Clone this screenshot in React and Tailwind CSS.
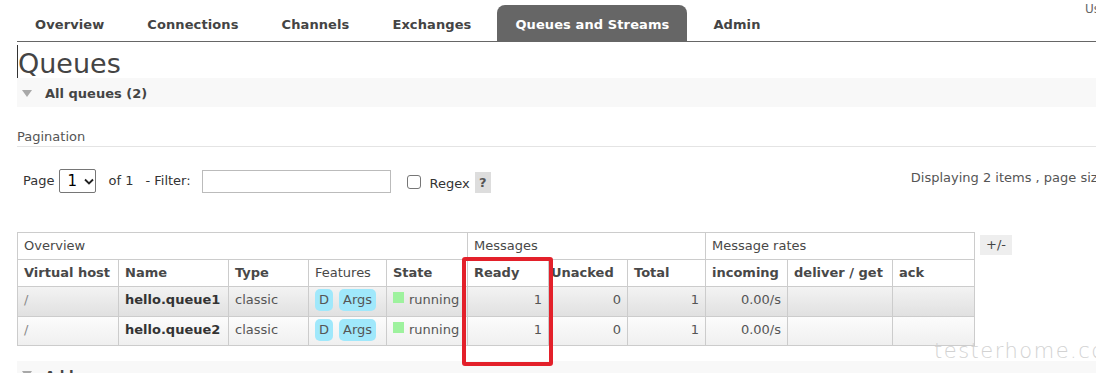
import React from 'react';

const tabs = ['Overview', 'Connections', 'Channels', 'Exchanges', 'Queues and Streams', 'Admin'];

const queues = [
  { vhost: '/', name: 'hello.queue1', type: 'classic', ready: 1, unacked: 0, total: 1, incoming: '0.00/s' },
  { vhost: '/', name: 'hello.queue2', type: 'classic', ready: 1, unacked: 0, total: 1, incoming: '0.00/s' },
];

const Triangle = () => (
  <svg width="10" height="7" viewBox="0 0 10 7" className="mr-[13px] shrink-0">
    <path d="M0 0 L10 0 L5 7 Z" fill="#a8a8a8" />
  </svg>
);

const App = () => {
  const th = 'border border-[#cccccc] px-[6px] text-left font-bold whitespace-nowrap';
  const td = 'border border-[#cccccc] px-[6px] pt-[3px] align-top whitespace-nowrap';

  return (
    <div className="relative w-[1096px] h-[373px] overflow-hidden bg-white text-[13px] text-[#484848] font-['DejaVu_Sans',sans-serif]">
      {/* top info, cut off at the edge */}
      <div className="absolute left-[1085px] top-[0px] text-[12px] text-[#666] whitespace-nowrap">User guest</div>

      {/* Tabs */}
      <div className="ml-[17px] pt-[5px] flex items-end gap-[9px] pl-px border-b border-[#666666] h-[42px]">
        {tabs.map((t) => (
          <div
            key={t}
            className={
              t === 'Queues and Streams'
                ? 'h-[36px] px-[18px] pt-[4px] flex items-center rounded-t-[8px] bg-[#666666] text-white font-bold tracking-[0.1px] whitespace-nowrap'
                : 'h-[36px] px-[17px] pt-[4px] flex items-center text-[#444] font-bold tracking-[0.1px] whitespace-nowrap'
            }
          >
            {t}
          </div>
        ))}
      </div>

      <div className="ml-[17px]">
        {/* Heading */}
        <h1 className="mt-[3px] h-[33px] border-l border-[#333] text-[27px] leading-[37px] text-[#444] font-normal overflow-visible">
          Queues
        </h1>

        {/* All queues section */}
        <div className="h-[29px] bg-[#f8f8f8] flex items-center pl-[5px] pt-[2px] font-bold text-[#444]">
          <Triangle />
          All queues (2)
        </div>

        {/* Pagination */}
        <div className="mt-[21px] h-[19px] pt-[1px] border-b border-[#e4e4e4] text-[#555] leading-[16px]">Pagination</div>

        <div className="mt-[22px] h-[24px] flex items-center pl-[6px] text-[#333] whitespace-nowrap">
          <span className="shrink-0">Page</span>
          <div className="shrink-0 ml-[5px] w-[37px] h-[24px] border border-[#767676] rounded-[2px] flex items-center pl-[7px] text-[15px] text-black">
            1
            <svg width="10" height="7" viewBox="0 0 10 7" className="ml-[7px]">
              <path d="M1 1.5 L5 5.5 L9 1.5" fill="none" stroke="#222" strokeWidth="1.8" />
            </svg>
          </div>
          <span className="shrink-0 ml-[12px]">of 1</span>
          <span className="shrink-0 ml-[12px]">- Filter:</span>
          <div className="shrink-0 ml-[11px] w-[189px] h-[23px] border border-[#bbbbbb] bg-white"></div>
          <div className="shrink-0 ml-[16px] mt-[2px] w-[14px] h-[14px] border border-[#767676] rounded-[3px] bg-white"></div>
          <span className="shrink-0 ml-[9px] mt-[5px]">Regex</span>
          <span className="shrink-0 ml-[5px] mt-[3px] w-[16px] h-[21px] bg-[#dddddd] flex items-center justify-center text-[#555] font-bold">?</span>
          <span className="shrink-0 ml-[420px] -mt-[6px] text-[#555]">Displaying 2 items , page size up to: 100</span>
        </div>

        {/* Table */}
        <div className="mt-[39px] flex items-start gap-[5px]">
          <table className="table-fixed border-collapse w-[957px] shrink-0">
            <colgroup>
              <col className="w-[101px]" />
              <col className="w-[110px]" />
              <col className="w-[80px]" />
              <col className="w-[78px]" />
              <col className="w-[81px]" />
              <col className="w-[81px]" />
              <col className="w-[79px]" />
              <col className="w-[78px]" />
              <col className="w-[82px]" />
              <col className="w-[105px]" />
              <col className="w-[82px]" />
            </colgroup>
            <thead>
              <tr className="h-[27px]">
                <th colSpan={5} className="border border-[#cccccc] px-[6px] text-left font-normal">Overview</th>
                <th colSpan={3} className="border border-[#cccccc] px-[6px] text-left font-normal">Messages</th>
                <th colSpan={3} className="border border-[#cccccc] px-[6px] text-left font-normal">Message rates</th>
              </tr>
              <tr className="h-[27px]">
                <th className={th}>Virtual host</th>
                <th className={th}>Name</th>
                <th className={th}>Type</th>
                <th className="border border-[#cccccc] px-[6px] text-left font-normal">Features</th>
                <th className={th}>State</th>
                <th className={th}>Ready</th>
                <th className="border border-[#cccccc] px-[2px] text-left font-bold whitespace-nowrap">Unacked</th>
                <th className={th}>Total</th>
                <th className={th}>incoming</th>
                <th className={th}>deliver / get</th>
                <th className={th}>ack</th>
              </tr>
            </thead>
            <tbody>
              {queues.map((q, i) => (
                <tr
                  key={q.name}
                  className={
                    i === 0
                      ? 'h-[30px] bg-gradient-to-b from-[#f3f3f3] to-[#e0e0e0]'
                      : 'h-[29px] bg-gradient-to-b from-[#fcfcfc] to-[#efefef]'
                  }
                >
                  <td className={td + ' text-[#888]'}>{q.vhost}</td>
                  <td className={td + ' font-bold text-[#333]'}>{q.name}</td>
                  <td className={td + ' text-[#555]'}>{q.type}</td>
                  <td className="border border-[#cccccc] px-[6px] pt-[2px] align-top whitespace-nowrap">
                    <div className="flex gap-[6px]">
                      <span className="h-[22px] px-[4px] rounded-[5px] bg-[#a0e8fb] text-[#555] flex items-end pb-[2px]">D</span>
                      <span className="h-[22px] px-[4px] rounded-[5px] bg-[#a0e8fb] text-[#555] flex items-end pb-[2px]">Args</span>
                    </div>
                  </td>
                  <td className={td + ' text-[#555] overflow-hidden'}>
                    <div className="flex items-start">
                      <span className="mt-[2px] w-[11px] h-[11px] bg-[#9ef29e] mr-[5px] shrink-0"></span>
                      running
                    </div>
                  </td>
                  <td className={td + ' text-right text-[#555]'}>{q.ready}</td>
                  <td className={td + ' text-right text-[#555]'}>{q.unacked}</td>
                  <td className={td + ' text-right text-[#555]'}>{q.total}</td>
                  <td className={td + ' text-right text-[#555]'}>{q.incoming}</td>
                  <td className={td}></td>
                  <td className={td}></td>
                </tr>
              ))}
            </tbody>
          </table>
          <div className="shrink-0 mt-[3px] w-[32px] h-[20px] bg-[#eeeeee] flex items-center justify-center text-[#444]">+/-</div>
        </div>

        {/* Add a new queue section */}
        <div className="mt-[15px] h-[29px] bg-[#f8f8f8] flex items-start pl-[5px] pt-[5px] font-bold text-[#444] whitespace-nowrap">
          <span className="mt-[5px]"><Triangle /></span>
          Add a new queue
        </div>
      </div>

      {/* Highlight drawn over the Ready column */}
      <div className="absolute left-[462px] top-[257px] w-[91px] h-[109px] border-[4px] border-[#e3202a] rounded-[3px]"></div>

      {/* Watermark */}
      <div className="absolute left-[934px] top-[336px] text-[21px] font-light text-[#d2d2d2] font-['DejaVu_Sans',sans-serif] tracking-[1.5px] whitespace-nowrap">
        testerhome.com
      </div>
    </div>
  );
};

export default App;
